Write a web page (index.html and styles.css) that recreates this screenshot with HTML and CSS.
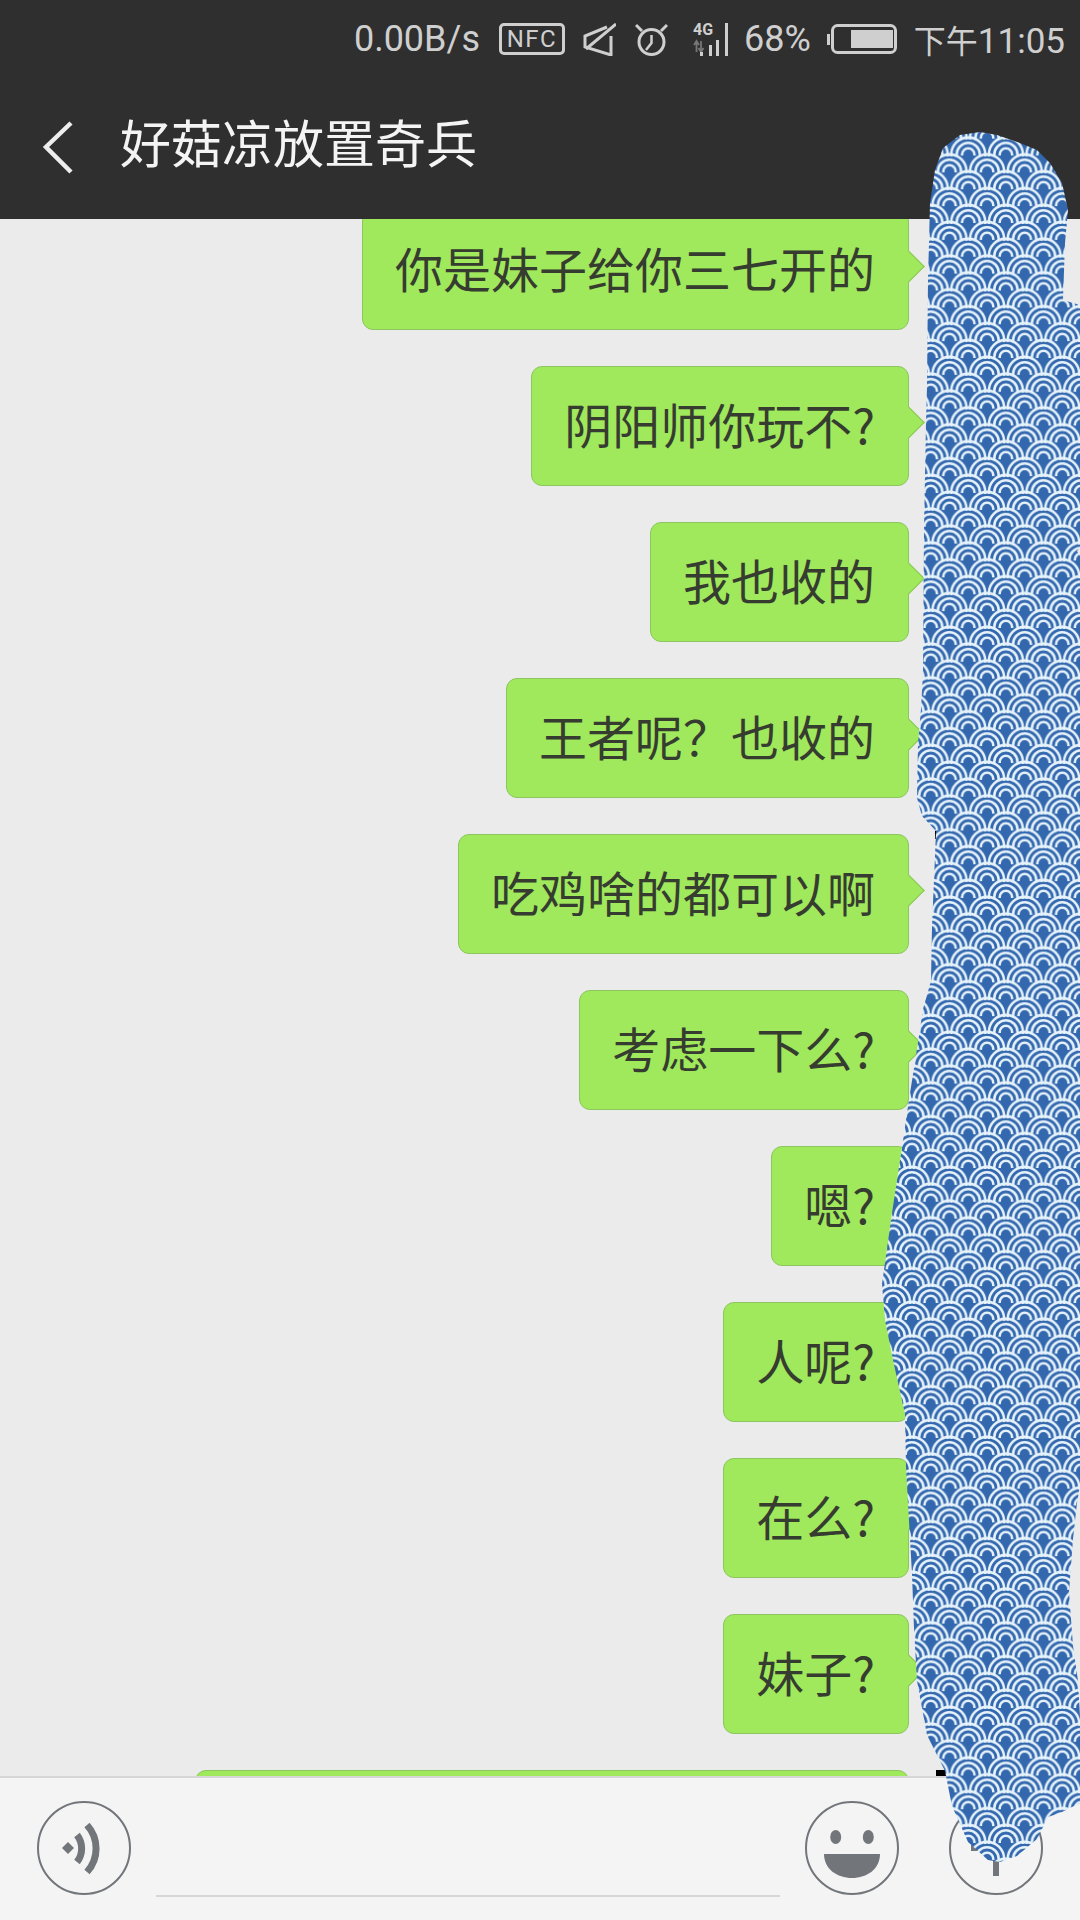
FILE: index.html
```html
<!DOCTYPE html>
<html lang="zh-CN">
<head>
  <meta charset="UTF-8" />
  <title>好菇凉放置奇兵</title>
  <link rel="stylesheet" href="styles.css">
</head>
<body>
  <div class="page">
    <header class="top">
      <div class="status">
        <span class="speed">0.00B/s</span>
        <span class="nfc">NFC</span>
        <svg class="ico-mute" width="33" height="33" viewBox="0 0 33 33" fill="none" stroke="#cfcfcf" stroke-width="3">
          <path d="M28 13V32L2 24V13L24 4"/>
          <path d="M33 1L3 26"/>
        </svg>
        <svg class="ico-alarm" width="33" height="33" viewBox="0 0 33 33" fill="none" stroke="#cfcfcf" stroke-width="3">
          <circle cx="16.5" cy="19" r="12.5"/>
          <path d="M16.5 12v8L11 27" stroke-width="2.5"/>
          <path d="M1 2l6 6M32 2l-6 6"/>
        </svg>
        <svg class="ico-signal" width="36" height="33" viewBox="0 0 36 33">
          <text x="0" y="12" class="net-label">4G</text>
          <path d="M3.5 18v11M1 22l2.5-4 2.5 4M8 29V18M5.5 25l2.5 4 2.5-4" fill="none" stroke="#777" stroke-width="1.8"/>
          <rect x="7" y="29" width="3" height="4" fill="#cfcfcf"/>
          <rect x="16" y="22" width="3" height="11" fill="#cfcfcf"/>
          <rect x="23" y="17" width="3" height="16" fill="#cfcfcf"/>
          <rect x="32" y="0" width="3" height="33" fill="#cfcfcf"/>
        </svg>
        <span class="pct">68%</span>
        <svg class="ico-batt" width="70" height="30" viewBox="0 0 70 30">
          <rect x="0" y="10" width="3" height="11" fill="#cfcfcf"/>
          <rect x="5.5" y="1.5" width="63" height="27" rx="5" fill="none" stroke="#cfcfcf" stroke-width="3"/>
          <rect x="24" y="6" width="42" height="18" fill="#cfcfcf"/>
        </svg>
        <span class="clock"><span class="ampm">下午</span>11:05</span>
      </div>
      <div class="titlebar">
        <svg class="back" width="32" height="54" viewBox="0 0 32 54" fill="none" stroke="#eeeeee" stroke-width="4.5">
          <path d="M29 2L4 26l25 25"/>
        </svg>
        <h1 class="title">好菇凉放置奇兵</h1>
      </div>
    </header>

    <main class="chat">
      <div class="msg">你是妹子给你三七开的</div>
      <div class="msg">阴阳师你玩不?</div>
      <div class="msg">我也收的</div>
      <div class="msg">王者呢？也收的</div>
      <div class="msg">吃鸡啥的都可以啊</div>
      <div class="msg">考虑一下么?</div>
      <div class="msg">嗯?</div>
      <div class="msg">人呢?</div>
      <div class="msg">在么?</div>
      <div class="msg">妹子?</div>
      <div class="msg msg-cut"></div>
    </main>

    <footer class="bar">
      <svg class="round" width="94" height="94" viewBox="0 0 94 94" fill="none" stroke="#72767a">
        <circle cx="47" cy="47" r="46" stroke-width="2"/>
        <path d="M50 24A35 35 0 0 1 50 71" stroke-width="7"/>
        <path d="M40 34A22 22 0 0 1 40 61" stroke-width="7"/>
        <path d="M31 41l6 6-6 6-6-6z" fill="#72767a" stroke="none"/>
      </svg>
      <div class="input"></div>
      <svg class="round" width="94" height="94" viewBox="0 0 94 94" fill="#72767a" stroke="none">
        <circle cx="47" cy="47" r="46" fill="none" stroke="#72767a" stroke-width="2"/>
        <ellipse cx="30.7" cy="36" rx="5.5" ry="7"/>
        <ellipse cx="63.3" cy="36" rx="5.5" ry="7"/>
        <path d="M19 53H75C75 68 62 77 47 77C32 77 19 68 19 53Z"/>
      </svg>
      <svg class="round plus" width="94" height="94" viewBox="0 0 94 94" fill="none" stroke="#72767a">
        <circle cx="47" cy="47" r="46" stroke-width="2"/>
        <path d="M47 19v56M22 47h50" stroke-width="6"/>
      </svg>
    </footer>

    <!-- hand drawn scribble over the right side of the shot -->
    <svg class="scribble" width="1080" height="1920" viewBox="0 0 1080 1920">
      <defs>
        <path id="scale" fill="none" stroke="#e6f3fb" stroke-width="2.5" d="M-17 2V0A17 17 0 0 1 17 0V2M-11.6 2V0A11.6 11.6 0 0 1 11.6 0V2M-6.2 1V0A6.2 6.2 0 0 1 6.2 0V1"/>
        <pattern id="waves" patternUnits="userSpaceOnUse" x="968.3" y="154.5" width="37.6" height="33.75">
          <rect width="37.6" height="33.75" fill="#3367ae"/>
          <use href="#scale" x="18.8" y="-16.875"/>
          <use href="#scale" x="0" y="0"/>
          <use href="#scale" x="37.6" y="0"/>
          <use href="#scale" x="18.8" y="16.875"/>
          <use href="#scale" x="0" y="33.75"/>
          <use href="#scale" x="37.6" y="33.75"/>
          <use href="#scale" x="18.8" y="50.625"/>
        </pattern>
      </defs>
      <rect x="936" y="1770" width="11" height="6" fill="#000"/>
      <rect x="935" y="831" width="2" height="8" fill="#000"/>
      <path fill="url(#waves)" d="M980 132L997 135L1020 143L1037 150L1050 163L1062 183L1068 210L1065 243L1063 300L1080 305V548L1077 551L1080 556V1485L1077 1503L1073 1539L1069 1592L1073 1646L1078 1681L1080 1717V1803L1060 1813L1048 1817L1037 1839L1017 1856L1000 1862L988 1860L968 1842L952 1806L945 1771L927 1735L917 1681L914 1628L912 1574L909 1521L906 1467L905 1414L893 1360L885 1320L882 1284L892 1213L903 1141L908 1106L917 1049L923 1009L931 981L932 927L935 856L936 831L922 816L917 798L918 744L921 709L923 673L924 530L926 423L927 387L928 280L929 243L930 203L935 170L943 148L960 135Z"/>
    </svg>
  </div>
</body>
</html>
```

FILE: styles.css
```css
html, body {
  margin: 0;
  padding: 0;
  background: #ebebeb;
}
.page {
  position: relative;
  width: 1080px;
  height: 1920px;
  display: flex;
  flex-direction: column;
  overflow: hidden;
  font-family: "Noto Sans CJK SC", "Noto Sans", sans-serif;
}

/* top */
.top {
  position: relative;
  z-index: 1;
  background: #2f2f2f;
  height: 219px;
  flex: none;
}
.status {
  display: flex;
  align-items: center;
  justify-content: flex-end;
  height: 78px;
  padding-right: 15px;
  color: #cfcfcf;
  font-family: Roboto, "Noto Sans CJK SC", sans-serif;
  font-size: 36px;
}
.speed {
  margin-right: 19px;
}
.nfc {
  box-sizing: border-box;
  width: 66px;
  height: 32px;
  border: 3px solid #cfcfcf;
  border-radius: 5px;
  font-size: 24px;
  line-height: 26px;
  letter-spacing: 1.5px;
  text-align: center;
  margin-right: 18px;
}
.ico-mute {
  margin-right: 19px;
}
.ico-alarm {
  margin-right: 25px;
}
.ico-signal {
  margin-right: 15px;
}
.net-label {
  font-family: Roboto, sans-serif;
  font-size: 16px;
  font-weight: 700;
  fill: #cfcfcf;
}
.pct {
  margin-right: 16px;
}
.ico-batt {
  margin-right: 17px;
}
.clock {
  font-size: 35px;
}
.ampm {
  font-size: 32px;
}
.titlebar {
  display: flex;
  align-items: center;
  height: 140px;
  padding-left: 42px;
}
.back {
  flex: none;
}
.title {
  margin: 0 0 14px 46px;
  font-size: 51px;
  font-weight: 400;
  color: #f4f4f4;
}

/* messages */
.chat {
  flex: 1;
  min-height: 0;
  overflow: hidden;
  display: flex;
  flex-direction: column;
  align-items: flex-end;
  gap: 36px;
  margin-top: -9px;
  padding-right: 171px;
}
.msg {
  position: relative;
  flex: none;
  box-sizing: border-box;
  height: 120px;
  padding: 0 33px 0 32px;
  background: #a0e85c;
  border: 1px solid #8bc75c;
  border-radius: 11px;
  color: #363c30;
  font-size: 48px;
  line-height: 112px;
  white-space: nowrap;
}
.msg::after {
  content: "";
  position: absolute;
  top: 44px;
  right: -12px;
  width: 22px;
  height: 22px;
  background: #a0e85c;
  border-top: 1px solid #8bc75c;
  border-right: 1px solid #8bc75c;
  transform: rotate(45deg);
}
.msg-cut {
  width: 714px;
}

/* input row */
.bar {
  flex: none;
  height: 144px;
  box-sizing: border-box;
  display: flex;
  align-items: flex-start;
  padding: 23px 37px 0;
  background: #f4f4f4;
  border-top: 2px solid #d6d6d6;
}
.round {
  flex: none;
}
.input {
  flex: 1;
  height: 94px;
  margin: 0 25px;
  border-bottom: 2px solid #d6d6d6;
}
.plus {
  margin-left: 50px;
}
.scribble {
  position: absolute;
  top: 0;
  left: 0;
  z-index: 2;
}
```
